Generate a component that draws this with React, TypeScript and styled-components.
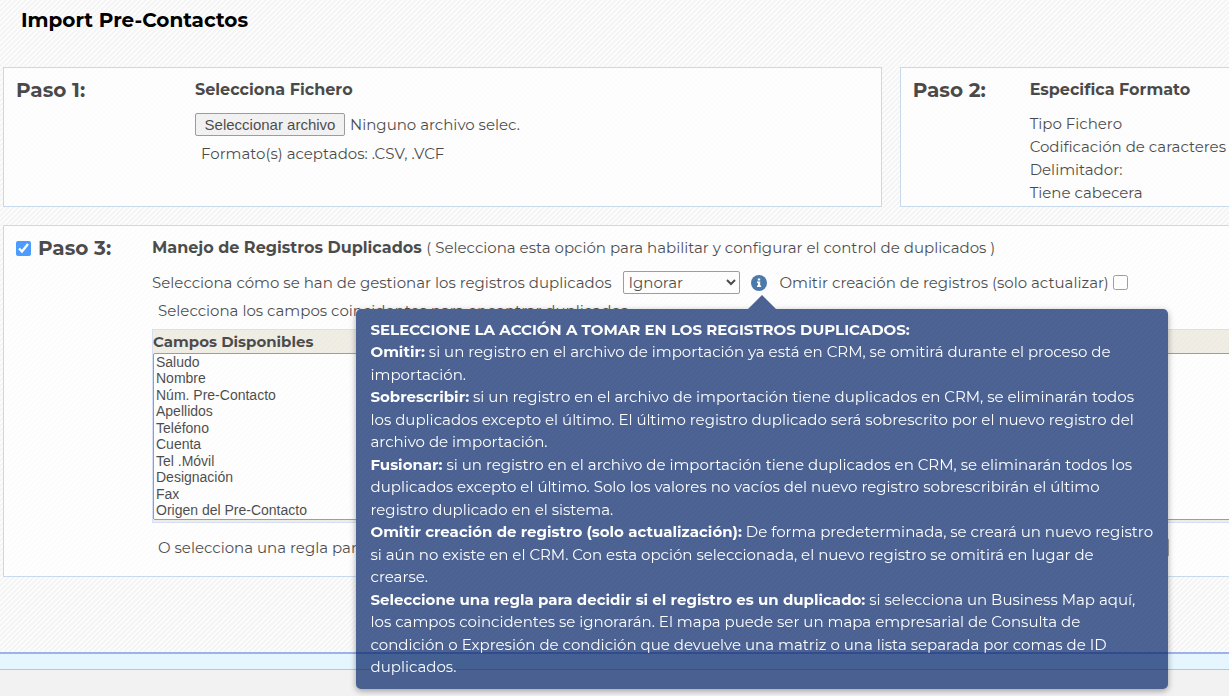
import React, { useRef, useState } from "react";
import styled, { createGlobalStyle } from "styled-components";

const GlobalStyle = createGlobalStyle`
  *, *::before, *::after { box-sizing: border-box; }
  body {
    margin: 0;
    color: #000;
    font-family: Montserrat, Inter, "Open Sans", sans-serif;
    font-size: 15px;
    line-height: 23px;
  }
`;

const Page = styled.div`
  display: flex;
  flex-direction: column;
  min-height: 100vh;
  overflow: hidden;
  background-color: #fff;
  background-image: linear-gradient(
    135deg,
    #f5f5f5 25%, #fdfdfd 25%, #fdfdfd 50%,
    #f5f5f5 50%, #f5f5f5 75%, #fdfdfd 75%
  );
  background-size: 5px 5px;
`;

const Title = styled.h1`
  margin: 0;
  padding: 8px 21px 35px;
  font-size: 20px;
  line-height: 24px;
`;

const Steps = styled.main`
  display: flex;
  flex-direction: column;
  gap: 18px;
  padding-left: 3px;
  margin-bottom: 75px;
`;

const StepRow = styled.div`
  display: flex;
  gap: 18px;
`;

const Card = styled.section<{ $width: string; $label: number }>`
  display: grid;
  grid-template-columns: ${(p) => p.$label}px 1fr;
  flex: none;
  align-items: start;
  width: ${(p) => p.$width};
  min-height: 140px;
  padding: 10px 12px 0;
  border: 1px solid #b4cce8;
  background: #fff;
  opacity: 0.7;
`;

const StepLabel = styled.h2`
  display: flex;
  align-items: center;
  gap: 7px;
  margin: 0;
  font-size: 20px;
  line-height: 24px;
`;

const CardTitle = styled.h3`
  margin: 0 0 10px;
  font-size: 16px;
  line-height: 24px;
  white-space: nowrap;
`;

const Note = styled.span`
  font-size: 15px;
  font-weight: 400;
`;

const Line = styled.div<{ $indent?: boolean }>`
  padding-left: ${(p) => (p.$indent ? 6 : 0)}px;
  white-space: nowrap;
`;

const FileRow = styled.div`
  display: flex;
  align-items: center;
  gap: 5px;
  margin: 11px 0 6px;
`;

const FileButton = styled.button`
  width: 150px;
  height: 23px;
  padding: 0;
  border: 1px solid #767676;
  border-radius: 2px;
  background: #efefef;
  color: #000;
  font: 15px "Liberation Sans", Arial, sans-serif;
`;

const Options = styled.div`
  display: flex;
  align-items: center;
  margin: 11px 0 5px;
  white-space: nowrap;
`;

const ActionSelect = styled.select`
  width: 117px;
  height: 23px;
  margin: 0 11px 0 12px;
  border: 1px solid #767676;
  border-radius: 2px;
  background: #fff;
  color: #000;
  font-family: inherit;
  font-size: 15px;
`;

const Check = styled.input`
  width: 15px;
  height: 15px;
  margin: 0;
`;

const CheckLabel = styled.label`
  display: flex;
  align-items: center;
  gap: 4px;
  margin-left: 12px;
`;

const InfoAnchor = styled.span`
  position: relative;
  display: flex;
  width: 16px;
  height: 16px;
`;

const Tooltip = styled.div`
  position: absolute;
  z-index: 1;
  top: 34px;
  left: -395px;
  width: 812px;
  padding: 10px 14px;
  border-radius: 5px;
  background: #002266;
  box-shadow: 0 2px 6px rgba(0, 0, 0, 0.5);
  color: #fff;
  line-height: 1.5;

  &::before {
    content: "";
    position: absolute;
    top: -14px;
    left: 392px;
    border: 14px solid transparent;
    border-top: 0;
    border-bottom-color: #002266;
  }

  p { margin: 0; }
`;

const FieldTable = styled.div`
  margin-top: 7px;
  padding-bottom: 2px;
  border: 1px solid #c8d4f8;
  background: #ebe7dc;
`;

const FieldHeader = styled.label`
  display: block;
  height: 23px;
  font-weight: 700;
`;

const FieldList = styled.select`
  display: block;
  width: 100%;
  height: 167px;
  overflow: hidden;
  border: 1px solid #767676;
  border-radius: 2px;
  background: #fff;
  color: #000;
  font: 14px "Liberation Sans", Arial, sans-serif;

  option {
    height: 16px;
    min-height: 0;
    padding: 0 2px;
    line-height: 16px;
  }

  option:nth-child(even) {
    height: 17px;
  }
`;

const RuleRow = styled.div`
  display: flex;
  align-items: center;
  width: 1017px;
  margin: 13px 0 17px;
  padding-left: 6px;
  white-space: nowrap;
`;

const RuleInput = styled.input`
  flex: 1;
  min-width: 0;
  height: 19px;
  margin-left: 12px;
  border: 1px solid #767676;
  border-radius: 2px;
`;

const StatusBand = styled.div`
  height: 18px;
  border-top: 2px solid #9fb1ec;
  border-bottom: 1px solid #c4c4c4;
  background: #e5f6ff;
`;

const Footer = styled.footer`
  flex: 1;
  min-height: 26px;
  background: #f2f2f2;
`;

const fields = [
  "Saludo", "Nombre", "Núm. Pre-Contacto", "Apellidos", "Teléfono",
  "Cuenta", "Tel .Móvil", "Designación", "Fax", "Origen del Pre-Contacto",
];

const InfoIcon = () => (
  <svg width="16" height="16" viewBox="0 0 16 16" aria-hidden="true">
    <circle cx="8" cy="8" r="8" fill="#004488" />
    <path d="M6.8 3.5h2.4v2H6.8zM6 6.6h3.2v4h.9v1.5H6v-1.5h.9V8.1H6z" fill="#fff" />
  </svg>
);

export default function App() {
  const fileRef = useRef<HTMLInputElement>(null);
  const [fileName, setFileName] = useState("Ninguno archivo selec.");

  return (
    <>
      <GlobalStyle />
      <Page>
        <Title>Import Pre-Contactos</Title>
        <Steps>
          <StepRow>
            <Card $width="calc(71.75% - 1px)" $label={179}>
              <StepLabel>Paso 1:</StepLabel>
              <div>
                <CardTitle>Selecciona Fichero</CardTitle>
                <FileRow>
                  <FileButton type="button" onClick={() => fileRef.current?.click()}>
                    Seleccionar archivo
                  </FileButton>
                  <input
                    ref={fileRef}
                    type="file"
                    accept=".csv,.vcf"
                    hidden
                    aria-label="Selecciona Fichero"
                    onChange={(e) => setFileName(e.target.files?.[0]?.name ?? "")}
                  />
                  <span>{fileName}</span>
                </FileRow>
                <Line $indent>Formato(s) aceptados: .CSV, .VCF</Line>
              </div>
            </Card>
            <Card $width="50%" $label={117}>
              <StepLabel>Paso 2:</StepLabel>
              <div>
                <CardTitle>Especifica Formato</CardTitle>
                <Line>Tipo Fichero</Line>
                <Line>Codificación de caracteres</Line>
                <Line>Delimitador:</Line>
                <Line>Tiene cabecera</Line>
              </div>
            </Card>
          </StepRow>
          <Card $width="122%" $label={136}>
            <StepLabel>
              <Check type="checkbox" id="step3" defaultChecked />
              <label htmlFor="step3">Paso 3:</label>
            </StepLabel>
            <div>
              <CardTitle>
                Manejo de Registros Duplicados{" "}
                <Note>( Selecciona esta opción para habilitar y configurar el control de duplicados )</Note>
              </CardTitle>
              <Options>
                <label htmlFor="action">Selecciona cómo se han de gestionar los registros duplicados</label>
                <ActionSelect id="action" defaultValue="Ignorar">
                  <option>Ignorar</option>
                  <option>Sobrescribir</option>
                  <option>Fusionar</option>
                </ActionSelect>
                <InfoAnchor>
                  <InfoIcon />
                  <Tooltip role="tooltip">
                    <p><b>SELECCIONE LA ACCIÓN A TOMAR EN LOS REGISTROS DUPLICADOS:</b></p>
                    <p>
                      <b>Omitir:</b> si un registro en el archivo de importación ya está en CRM, se omitirá durante el proceso de<br />
                      importación.
                    </p>
                    <p>
                      <b>Sobrescribir:</b> si un registro en el archivo de importación tiene duplicados en CRM, se eliminarán todos<br />
                      los duplicados excepto el último. El último registro duplicado será sobrescrito por el nuevo registro del<br />
                      archivo de importación.
                    </p>
                    <p>
                      <b>Fusionar:</b> si un registro en el archivo de importación tiene duplicados en CRM, se eliminarán todos los<br />
                      duplicados excepto el último. Solo los valores no vacíos del nuevo registro sobrescribirán el último<br />
                      registro duplicado en el sistema.
                    </p>
                    <p>
                      <b>Omitir creación de registro (solo actualización):</b> De forma predeterminada, se creará un nuevo registro<br />
                      si aún no existe en el CRM. Con esta opción seleccionada, el nuevo registro se omitirá en lugar de<br />
                      crearse.
                    </p>
                    <p>
                      <b>Seleccione una regla para decidir si el registro es un duplicado:</b> si selecciona un Business Map aquí,<br />
                      los campos coincidentes se ignorarán. El mapa puede ser un mapa empresarial de Consulta de<br />
                      condición o Expresión de condición que devuelve una matriz o una lista separada por comas de ID<br />
                      duplicados.
                    </p>
                  </Tooltip>
                </InfoAnchor>
                <CheckLabel>
                  Omitir creación de registros (solo actualizar)
                  <Check type="checkbox" />
                </CheckLabel>
              </Options>
              <Line $indent>Selecciona los campos coincidentes para encontrar duplicados</Line>
              <FieldTable>
                <FieldHeader htmlFor="fields">Campos Disponibles</FieldHeader>
                <FieldList id="fields" multiple size={10}>
                  {fields.map((f) => <option key={f}>{f}</option>)}
                </FieldList>
              </FieldTable>
              <RuleRow>
                <label htmlFor="rule">O selecciona una regla para</label>
                <RuleInput id="rule" type="text" />
              </RuleRow>
            </div>
          </Card>
        </Steps>
        <StatusBand />
        <Footer />
      </Page>
    </>
  );
}
